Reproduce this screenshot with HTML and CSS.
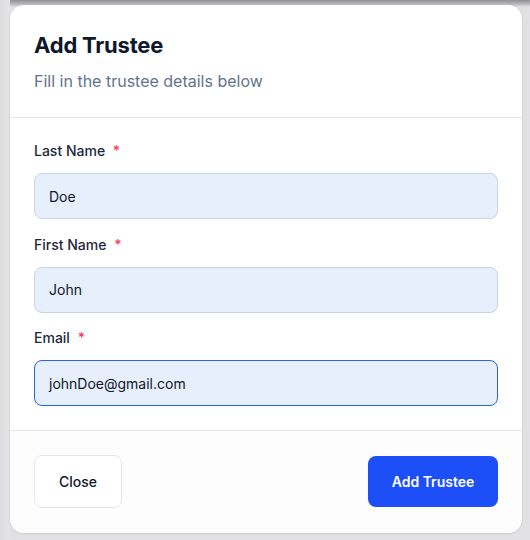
FILE: index.html
```html
<!DOCTYPE html>
<html lang="en">
<head>
<meta charset="utf-8">
<title>Add Trustee</title>
<link rel="stylesheet" href="styles.css">
</head>
<body>
<div class="backdrop">
  <div class="modal">
    <div class="modal-header">
      <h1 class="modal-title">Add Trustee</h1>
      <p class="modal-subtitle">Fill in the trustee details below</p>
    </div>
    <div class="modal-body">
      <div class="field">
        <label class="field-label">Last Name <span class="req">*</span></label>
        <div class="input">Doe</div>
      </div>
      <div class="field">
        <label class="field-label">First Name <span class="req">*</span></label>
        <div class="input">John</div>
      </div>
      <div class="field">
        <label class="field-label">Email <span class="req">*</span></label>
        <div class="input input-focus">johnDoe@gmail.com</div>
      </div>
    </div>
    <div class="modal-footer">
      <button class="btn btn-secondary">Close</button>
      <button class="btn btn-primary">Add Trustee</button>
    </div>
  </div>
</div>
</body>
</html>
```

FILE: styles.css
```css
* { box-sizing: border-box; }
html, body { margin: 0; padding: 0; }
body {
  width: 530px;
  height: 540px;
  overflow: hidden;
  font-family: Inter, "Liberation Sans", sans-serif;
  background: linear-gradient(to bottom, #8e9096 0px, #b7b8bc 4px, #e1e1e3 7px, #e1e1e3 100%);
}
.backdrop {
  padding: 5px 8px 7px 10px;
  background: linear-gradient(to right, #dcdcde 0px, #e4e4e6 10px, transparent 10px);
}
.modal {
  width: 512px;
  height: 528px;
  background: #ffffff;
  border-radius: 14px;
  box-shadow: 0 0 0 1px rgba(0,0,0,0.04), 0 1px 2px rgba(0,0,0,0.06);
  display: flex;
  flex-direction: column;
  overflow: hidden;
}
.modal-header {
  padding: 26px 24px 24px;
  border-bottom: 1px solid #e2e8f0;
}
.modal-title {
  margin: 0;
  font-size: 22px;
  line-height: 28px;
  font-weight: 700;
  color: #0f172a;
  letter-spacing: -0.2px;
}
.modal-subtitle {
  margin: 10px 0 0;
  font-size: 16px;
  line-height: 24px;
  color: #64748b;
}
.modal-body {
  padding: 23px 24px 24px;
  display: flex;
  flex-direction: column;
  gap: 15.5px;
  border-bottom: 1px solid #e2e8f0;
}
.field {
  display: flex;
  flex-direction: column;
  gap: 12px;
}
.field-label {
  font-size: 14px;
  line-height: 20px;
  font-weight: 500;
  color: #1e293b;
}
.req {
  color: #f43f5e;
  margin-left: 4px;
}
.input {
  height: 46px;
  padding: 0 14px;
  display: flex;
  align-items: center;
  background: #e7eefc;
  border: 1px solid #cbd5e1;
  border-radius: 8px;
  font-size: 14px;
  color: #0f172a;
}
.input-focus {
  border-color: #2563eb;
}
.modal-footer {
  flex: 1;
  padding: 24px;
  display: flex;
  justify-content: space-between;
  align-items: flex-start;
  background: #fdfdfe;
}
.btn {
  font-family: inherit;
  font-size: 14px;
  font-weight: 500;
  height: 53px;
  border-radius: 8px;
  cursor: pointer;
}
.btn-secondary {
  width: 88px;
  background: #ffffff;
  border: 1px solid #e5e7eb;
  color: #111827;
}
.btn-primary {
  width: 130px;
  margin-top: 1px;
  height: 51px;
  background: #1d4ff8;
  border: none;
  color: #ffffff;
  font-weight: 600;
}
```
